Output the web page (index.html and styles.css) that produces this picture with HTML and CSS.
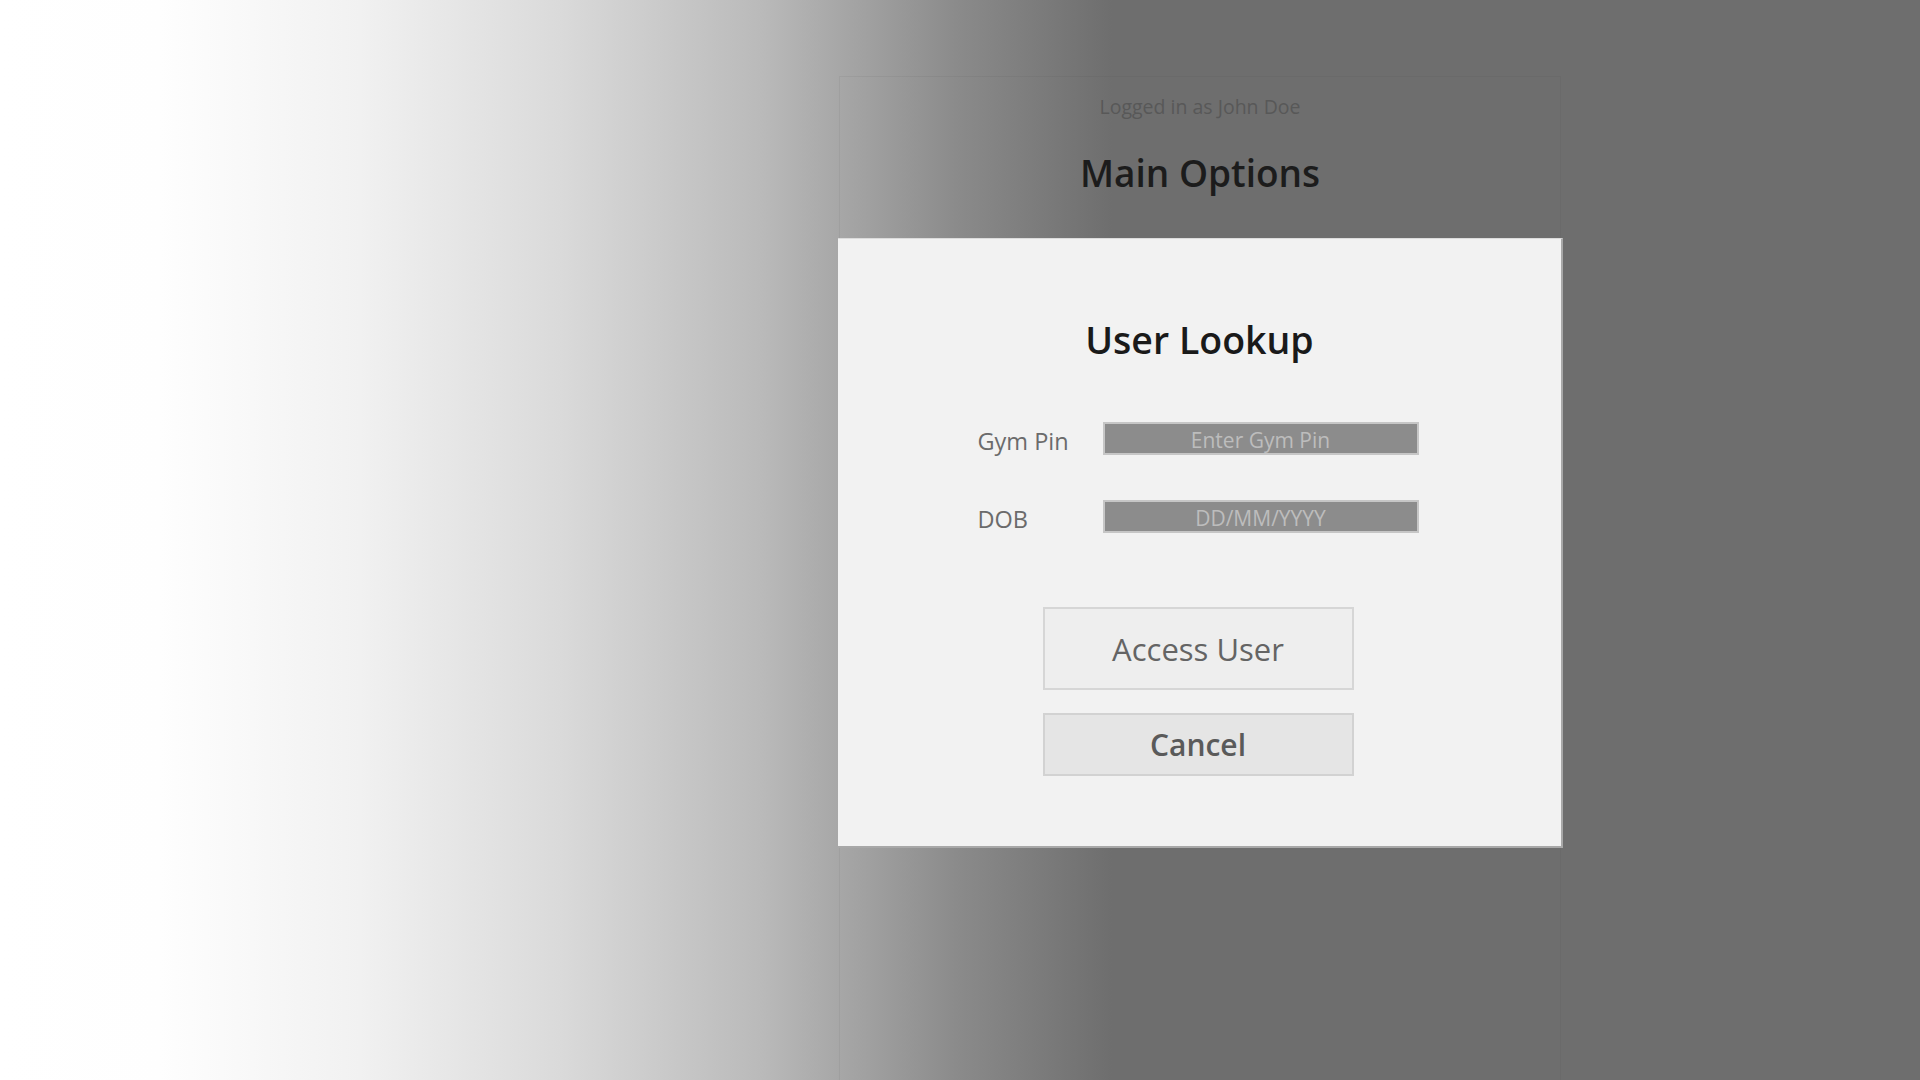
FILE: index.html
```html
<!DOCTYPE html>
<html lang="en">
<head>
<meta charset="utf-8">
<title>User Lookup</title>
<link rel="stylesheet" href="styles.css">
</head>
<body>
<div class="page">
  <main class="panel">
    <p class="logged">Logged in as John Doe</p>
    <h1 class="main-title">Main Options</h1>
  </main>
</div>
<div class="dialog">
  <h2 class="dialog-title">User Lookup</h2>
  <div class="form">
    <label class="label" for="pin">Gym Pin</label>
    <input class="field" id="pin" type="text" placeholder="Enter Gym Pin">
    <label class="label" for="dob">DOB</label>
    <input class="field" id="dob" type="text" placeholder="DD/MM/YYYY">
  </div>
  <div class="actions">
    <button class="btn btn-access">Access User</button>
    <button class="btn btn-cancel">Cancel</button>
  </div>
</div>
</body>
</html>
```

FILE: styles.css
```css
html, body {
  margin: 0;
  padding: 0;
  height: 100%;
}
body {
  width: 1920px;
  height: 1080px;
  overflow: hidden;
  font-family: "Open Sans", "Noto Sans", "Liberation Sans", sans-serif;
  background: linear-gradient(to right,
    #ffffff 0px,
    #fefefe 160px,
    #f1f1f1 360px,
    #dadada 560px,
    #bababa 760px,
    #8a8a8a 960px,
    #6e6e6e 1112px,
    #6e6e6e 1920px);
  position: relative;
}
.page {
  display: flex;
  padding-left: 839px;
  padding-top: 76px;
  height: 1004px;
}
.panel {
  width: 720px;
  border: 1px solid rgba(60, 60, 60, 0.07);
  border-bottom: none;
  display: flex;
  flex-direction: column;
  align-items: center;
}
.logged {
  margin: 18px 0 0;
  font-size: 19.5px;
  line-height: 24px;
  color: #585858;
}
.main-title {
  margin: 31px 0 0;
  font-size: 37px;
  line-height: 46px;
  font-weight: 600;
  color: #1c1c1c;
}
.dialog {
  position: absolute;
  left: 838px;
  top: 238px;
  width: 725px;
  height: 610px;
  box-sizing: border-box;
  background: #f2f2f2;
  border-top: 1px solid #dcdcdc;
  border-right: 2px solid #a8a8a8;
  border-bottom: 2px solid #a8a8a8;
  display: flex;
  flex-direction: column;
  align-items: center;
}
.dialog-title {
  margin: 78px 0 0;
  font-size: 37.5px;
  line-height: 46px;
  font-weight: 600;
  color: #1a1a1a;
}
.form {
  margin-top: 59px;
  margin-left: -3px;
  display: grid;
  grid-template-columns: 125px 316px;
  grid-auto-rows: 33px;
  row-gap: 45px;
  align-items: center;
}
.label {
  font-size: 23.5px;
  line-height: 32px;
  height: 32px;
  color: #6b6b6b;
  position: relative;
  top: 2px;
}
.field {
  box-sizing: border-box;
  width: 316px;
  height: 33px;
  margin: 0;
  border: 2px solid #c6c6c6;
  background: #8c8c8c;
  font-family: inherit;
  font-size: 21px;
  text-align: center;
  color: #d0d0d0;
  padding: 3px 4px 0;
  outline: none;
}
.field::placeholder {
  color: #bdbdbd;
}
.actions {
  margin-top: 74px;
  margin-left: -3px;
  display: flex;
  flex-direction: column;
  gap: 23px;
}
.btn {
  box-sizing: border-box;
  width: 311px;
  font-family: inherit;
  margin: 0;
  cursor: pointer;
}
.btn-access {
  height: 83px;
  background: #eeeeee;
  border: 2px solid #d6d6d6;
  font-size: 31px;
  font-weight: 400;
  color: #646464;
}
.btn-cancel {
  height: 63px;
  background: #e5e5e5;
  border: 2px solid #d2d2d2;
  font-size: 30px;
  font-weight: 600;
  color: #5a5a5a;
}
```
